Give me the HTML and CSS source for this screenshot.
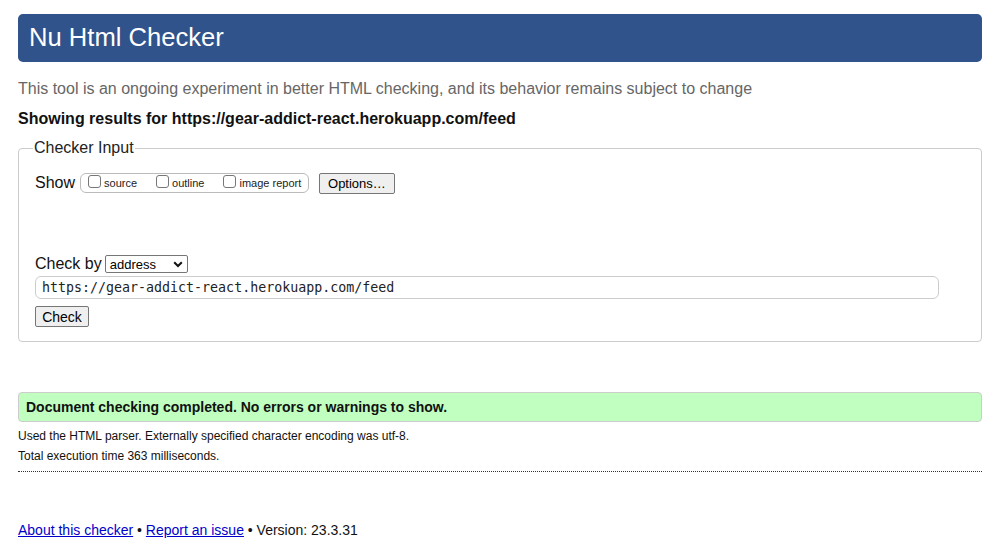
FILE: index.html
```html
<!DOCTYPE html>
<html lang="en">
<head>
<meta charset="utf-8">
<title>Nu Html Checker</title>
<link rel="stylesheet" href="styles.css">
</head>
<body>
<h1 class="banner">Nu Html Checker</h1>
<p class="intro">This tool is an ongoing experiment in better HTML checking, and its behavior remains subject to change</p>
<p class="showing">Showing results for https://gear-addict-react.herokuapp.com/feed</p>
<fieldset class="input-box">
  <legend class="legend">Checker Input</legend>
  <div class="show-row">
    <span class="show-label">Show</span>
    <span class="show-group">
      <label class="opt"><input type="checkbox" class="cb">source</label>
      <label class="opt"><input type="checkbox" class="cb">outline</label>
      <label class="opt"><input type="checkbox" class="cb">image report</label>
    </span>
    <button class="btn">Options…</button>
  </div>
  <div class="checkby-row">
    <span class="show-label">Check by</span>
    <span class="select"><span>address</span><svg class="chev" width="10" height="7" viewBox="0 0 10 7"><path d="M1.2 1.2 L5 5 L8.8 1.2" fill="none" stroke="#111" stroke-width="2"/></svg></span>
  </div>
  <div class="url-field">https://gear-addict-react.herokuapp.com/feed</div>
  <button class="btn check-btn">Check</button>
</fieldset>
<div class="success">Document checking completed. No errors or warnings to show.</div>
<p class="details">Used the HTML parser. Externally specified character encoding was utf-8.</p>
<p class="details last">Total execution time 363 milliseconds.</p>
<footer class="footer"><a href="#" class="link">About this checker</a> • <a href="#" class="link">Report an issue</a> • Version: 23.3.31</footer>
</body>
</html>
```
FILE: styles.css
```css
html, body { margin: 0; padding: 0; }
body {
  padding: 14px 14px 0 18px;
  font-family: "Liberation Sans", Arial, sans-serif;
  color: #000;
  background: #fff;
}
.banner {
  margin: 0;
  height: 48px;
  box-sizing: border-box;
  background: #30538b;
  color: #fff;
  border-radius: 5px;
  font-size: 25.6px;
  font-weight: normal;
  line-height: 47px;
  padding-left: 11px;
}
.intro {
  margin: 17px 0 0;
  font-size: 16px;
  line-height: 20px;
  color: #666;
}
.showing {
  margin: 10px 0 0;
  font-size: 16px;
  line-height: 20px;
  font-weight: bold;
  color: #111;
}
.input-box {
  margin: 10px 0 0;
  border: 1px solid #ccc;
  border-radius: 4px;
  padding: 12px 16px 14px 16px;
}
.legend {
  font-size: 16px;
  padding: 0 1px;
  margin-left: -2px;
  color: #222;
}
.show-row {
  display: flex;
  align-items: center;
  height: 22px;
  margin-top: 3px;
}
.show-label {
  font-size: 16px;
  color: #111;
  white-space: nowrap;
}
.show-group {
  margin-left: 5px;
  display: inline-flex;
  align-items: center;
  height: 20px;
  box-sizing: border-box;
  border: 1px solid #bbb;
  border-radius: 6px;
  padding: 0 4px 0 7px;
  width: 229px;
  white-space: nowrap;
}
.opt {
  display: inline-flex;
  align-items: center;
  font-size: 11px;
  color: #222;
  margin-right: 19px;
  white-space: nowrap;
  flex-shrink: 0;
}
.opt:last-child { margin-right: 0; }
.cb {
  appearance: none;
  -webkit-appearance: none;
  width: 13px;
  height: 13px;
  margin: 0 3px 0 0;
  border: 1px solid #777;
  border-radius: 3px;
  background: #fff;
  position: relative;
  top: -2px;
  flex-shrink: 0;
}
.btn {
  font-family: "Liberation Sans", Arial, sans-serif;
  font-size: 13px;
  color: #000;
  background: #efefef;
  border: 1px solid #767676;
  border-radius: 2px;
  height: 21px;
  padding: 0 8px;
  margin-left: 10px;
  white-space: nowrap;
}
.checkby-row {
  display: flex;
  align-items: center;
  margin-top: 60px;
  height: 20px;
}
.select {
  margin-left: 3px;
  display: inline-flex;
  align-items: center;
  justify-content: space-between;
  width: 83px;
  height: 18px;
  box-sizing: border-box;
  border: 1px solid #767676;
  border-radius: 2px;
  padding: 0 4px 0 4px;
  font-size: 13px;
  color: #000;
}
.url-field {
  margin-top: 2px;
  width: 904px;
  height: 23px;
  box-sizing: border-box;
  border: 1px solid #ccc;
  border-radius: 6px;
  padding-left: 6px;
  font-family: "DejaVu Sans Mono", "Liberation Mono", monospace;
  font-size: 13.3px;
  line-height: 21px;
  color: #222;
}
.check-btn {
  margin: 7px 0 0;
  display: block;
  width: 54px;
  padding: 0;
  font-size: 14px;
}
.success {
  margin-top: 50px;
  height: 30px;
  box-sizing: border-box;
  background: #c0ffc0;
  border: 1px solid #ccc;
  border-radius: 4px;
  font-size: 14px;
  font-weight: bold;
  line-height: 28px;
  padding-left: 7px;
  color: #111;
}
.details {
  margin: 7px 0 0;
  font-size: 12px;
  line-height: 15px;
  color: #111;
}
.details + .details { margin-top: 5px; }
.details.last {
  padding-bottom: 7px;
  border-bottom: 1px dotted #333;
}
.footer {
  margin-top: 50px;
  font-size: 14px;
  line-height: 17px;
  color: #111;
}
.link { color: #00c; text-decoration: underline; }
```
